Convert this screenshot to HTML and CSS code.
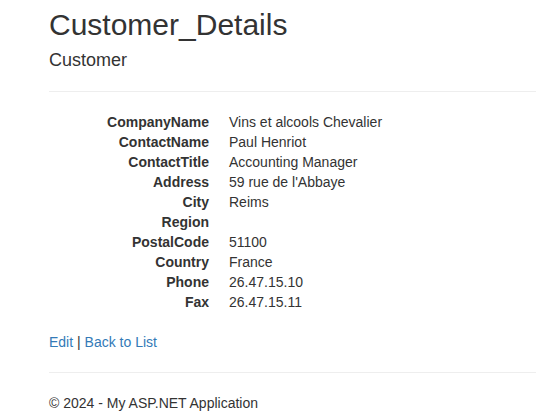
FILE: index.html
```html
<!DOCTYPE html>
<html>
<head>
<meta charset="utf-8">
<title>Customer_Details</title>
<link rel="stylesheet" href="styles.css">
</head>
<body>
<div class="page">
  <h2 class="title">Customer_Details</h2>
  <div>
    <h4 class="subtitle">Customer</h4>
    <hr class="rule">
    <dl class="details">
      <dt>CompanyName</dt><dd>Vins et alcools Chevalier</dd>
      <dt>ContactName</dt><dd>Paul Henriot</dd>
      <dt>ContactTitle</dt><dd>Accounting Manager</dd>
      <dt>Address</dt><dd>59 rue de l'Abbaye</dd>
      <dt>City</dt><dd>Reims</dd>
      <dt>Region</dt><dd></dd>
      <dt>PostalCode</dt><dd>51100</dd>
      <dt>Country</dt><dd>France</dd>
      <dt>Phone</dt><dd>26.47.15.10</dd>
      <dt>Fax</dt><dd>26.47.15.11</dd>
    </dl>
  </div>
  <p class="actions"><a href="#" class="link">Edit</a> | <a href="#" class="link">Back to List</a></p>
  <hr class="rule">
  <footer>
    <p class="copy">© 2024 - My ASP.NET Application</p>
  </footer>
</div>
</body>
</html>
```

FILE: styles.css
```css
html, body {
  margin: 0;
  padding: 0;
  background: #fff;
}
body {
  font-family: "Liberation Sans", Arial, Helvetica, sans-serif;
  font-size: 14px;
  line-height: 20px;
  color: #333;
}
.page {
  padding-left: 49px;
  padding-top: 8px;
}
.title {
  font-size: 30px;
  font-weight: 500;
  line-height: 33px;
  margin: 0 0 10px;
}
.subtitle {
  font-size: 18px;
  font-weight: 500;
  line-height: 19.8px;
  margin: 10px 0 10px;
}
.rule {
  margin: 20px 0;
  border: 0;
  border-top: 1px solid #eee;
  height: 0;
}
.details {
  display: grid;
  grid-template-columns: 160px 1fr;
  column-gap: 20px;
  margin: 0 0 20px;
}
.details dt {
  font-weight: bold;
  text-align: right;
  white-space: nowrap;
  min-height: 20px;
}
.details dd {
  margin: 0;
  min-height: 20px;
}
.actions {
  margin: 0 0 10px;
}
.link {
  color: #337ab7;
  text-decoration: none;
}
.copy {
  margin: 0 0 10px;
}
```
